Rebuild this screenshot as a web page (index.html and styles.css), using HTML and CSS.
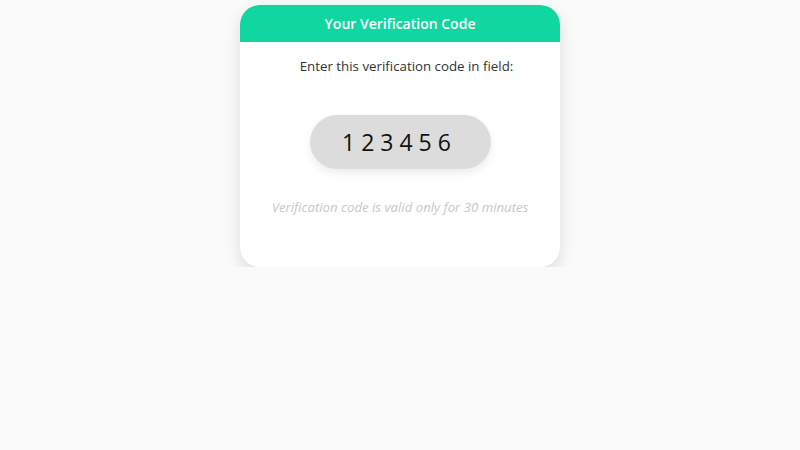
FILE: index.html
```html
<!DOCTYPE html>
<html lang="en">

<head>
    <meta charset="UTF-8" />
    <meta name="viewport" content="width=device-width, initial-scale=1.0" />
    <title>Verification Code</title>
    <link rel="stylesheet" href="styles.css">
</head>

<body>
    <div class="card">
        <div class="card-header">Your Verification Code</div>
        <div class="card-body">
            <p class="intro">Enter this verification code in field:</p>
            <div class="code">1 2 3 4 5 6</div>
            <p class="note">Verification code is valid only for 30 minutes</p>
        </div>
    </div>
</body>

</html>
```

FILE: styles.css
```css
body {
    margin: 0;
    padding-top: 5px;
    font-family: "Open Sans", sans-serif;
    background-color: #fafafa;
}

.card {
    width: 320px;
    margin: 0 auto;
    background: white;
    border-radius: 20px;
    overflow: hidden;
    box-shadow: 0 6px 16px rgba(0, 0, 0, 0.12);
}

.card-header {
    height: 37px;
    line-height: 37px;
    background-color: #10d6a0;
    color: white;
    font-size: 14px;
    font-weight: 600;
    text-align: center;
}

.card-body {
    padding: 15px 20px 51px;
    display: flex;
    flex-direction: column;
    align-items: center;
}

.intro {
    margin: 0;
    padding-left: 13px;
    font-size: 13.3px;
    line-height: 19px;
    color: #333;
}

.code {
    margin-top: 39px;
    width: 181px;
    height: 54px;
    line-height: 54px;
    padding-right: 7px;
    box-sizing: border-box;
    border-radius: 27px;
    background-color: #dcdcdc;
    color: #111;
    font-size: 23px;
    text-align: center;
    box-shadow: 0 4px 10px rgba(0, 0, 0, 0.08);
}

.note {
    margin: 29px 0 0;
    font-size: 13.2px;
    line-height: 18px;
    font-style: italic;
    color: #c8c8c8;
}
```
